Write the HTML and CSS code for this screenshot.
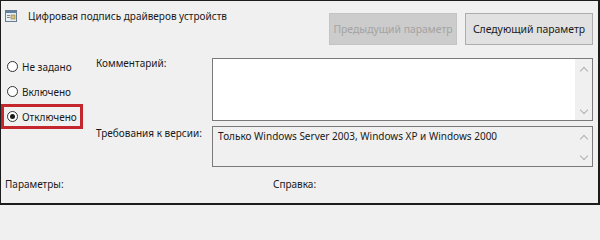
FILE: index.html
```html
<!DOCTYPE html>
<html lang="ru">
<head>
<meta charset="utf-8">
<link rel="stylesheet" href="styles.css">
</head>
<body>
<div class="frame">
  <div class="header">
    <div class="title">
      <svg class="icon" width="12" height="12" viewBox="0 0 12 12">
        <rect x="0.5" y="0.5" width="11" height="11" fill="#e8eef4" stroke="#6a7d90"/>
        <rect x="1" y="1" width="10" height="2" fill="#5f7f9f"/>
        <rect x="2" y="5" width="3" height="1" fill="#7a8a9a"/>
        <rect x="2" y="7" width="3" height="1" fill="#7a8a9a"/>
        <rect x="6" y="5" width="4" height="4" fill="#d9c37a" stroke="#8a7a40" stroke-width="0.6"/>
      </svg>
      <span>Цифровая подпись драйверов устройств</span>
    </div>
    <div class="buttons">
      <div class="btn disabled">Предыдущий параметр</div>
      <div class="btn">Следующий параметр</div>
    </div>
  </div>
  <div class="main">
    <div class="radios">
      <div class="radio"><span class="circle"></span><span>Не задано</span></div>
      <div class="radio"><span class="circle"></span><span>Включено</span></div>
      <div class="radio checked"><span class="circle"></span><span>Отключено</span></div>
    </div>
    <div class="labels">
      <div class="label l1">Комментарий:</div>
      <div class="label l2">Требования к версии:</div>
    </div>
    <div class="boxes">
      <div class="box comment">
        <div class="content"></div>
        <div class="scroll"><span class="up"></span><span class="down"></span></div>
      </div>
      <div class="box version">
        <div class="content">Только Windows Server 2003, Windows XP и Windows 2000</div>
        <div class="scroll"><span class="up"></span><span class="down"></span></div>
      </div>
    </div>
  </div>
  <div class="footer">
    <span class="f1">Параметры:</span>
    <span class="f2">Справка:</span>
  </div>
</div>
</body>
</html>
```

FILE: styles.css
```css
html, body {
  margin: 0;
  padding: 0;
  background: #f0f0f0;
}
.frame {
  width: 600px;
  height: 205px;
  box-sizing: border-box;
  border-style: solid;
  border-color: #1c1c1c;
  border-width: 1px 2px 2px 1px;
  background: #f0f0f0;
  font-family: "Noto Sans", "Open Sans", sans-serif;
  font-size: 10px;
  color: #1a1a1a;
  display: flex;
  flex-direction: column;
  overflow: hidden;
  white-space: nowrap;
}
.header {
  display: flex;
  justify-content: space-between;
  align-items: flex-start;
  height: 56px;
}
.title {
  display: flex;
  align-items: center;
  padding-top: 8px;
  padding-left: 4px;
  gap: 11px;
  font-size: 10px;
}
.icon { display: block; }
.buttons {
  display: flex;
  gap: 8px;
  margin-top: 12px;
  margin-right: 5px;
}
.btn {
  width: 126px;
  height: 30px;
  border: 1px solid #adadad;
  background: #e1e1e1;
  display: flex;
  align-items: center;
  justify-content: center;
  color: #1a1a1a;
  font-size: 10.4px;
}
.btn.disabled {
  background: #cccccc;
  border-color: #c4c4c4;
  color: #a3a3a3;
}
.main {
  display: flex;
  height: 110px;
}
.radios {
  width: 95px;
  display: flex;
  flex-direction: column;
}
.radio {
  display: flex;
  align-items: center;
  gap: 4px;
  height: 19px;
  margin-bottom: 6px;
  padding-left: 6px;
}
.radio.checked {
  border: 3px solid #c4262e;
  width: 73px;
  height: 19px;
  padding-left: 3px;
  margin-top: -3px;
}
.circle {
  width: 11px;
  height: 11px;
  border: 1px solid #333;
  border-radius: 50%;
  background: #fff;
  box-sizing: border-box;
  display: flex;
  align-items: center;
  justify-content: center;
}
.radio.checked .circle::after {
  content: "";
  width: 5px;
  height: 5px;
  border-radius: 50%;
  background: #1a1a1a;
}
.labels {
  width: 116px;
  margin-top: -1px;
}
.label.l1 { height: 70px; }
.boxes {
  width: 381px;
  display: flex;
  flex-direction: column;
  gap: 5px;
  padding-top: 1px;
}
.box {
  display: flex;
  border: 1px solid #7a7a7a;
  box-sizing: border-box;
}
.box.comment { height: 63px; background: #fff; }
.box.version { height: 41px; background: #f0f0f0; }
.content {
  flex: 1;
  padding: 2px 5px;
}
.scroll {
  width: 17px;
  background: #f0f0f0;
  display: flex;
  flex-direction: column;
  justify-content: space-between;
  align-items: center;
  padding: 6px 0 4px;
}
.up, .down {
  width: 5px;
  height: 5px;
  border-color: #b0b0b0;
  border-style: solid;
  border-width: 1px 0 0 1px;
}
.up { transform: rotate(45deg); margin-top: 3px; }
.down { transform: rotate(225deg); margin-bottom: 3px; }
.footer {
  display: flex;
  align-items: center;
  padding-top: 10px;
  padding-left: 4px;
}
.f1 { width: 268px; }
```
